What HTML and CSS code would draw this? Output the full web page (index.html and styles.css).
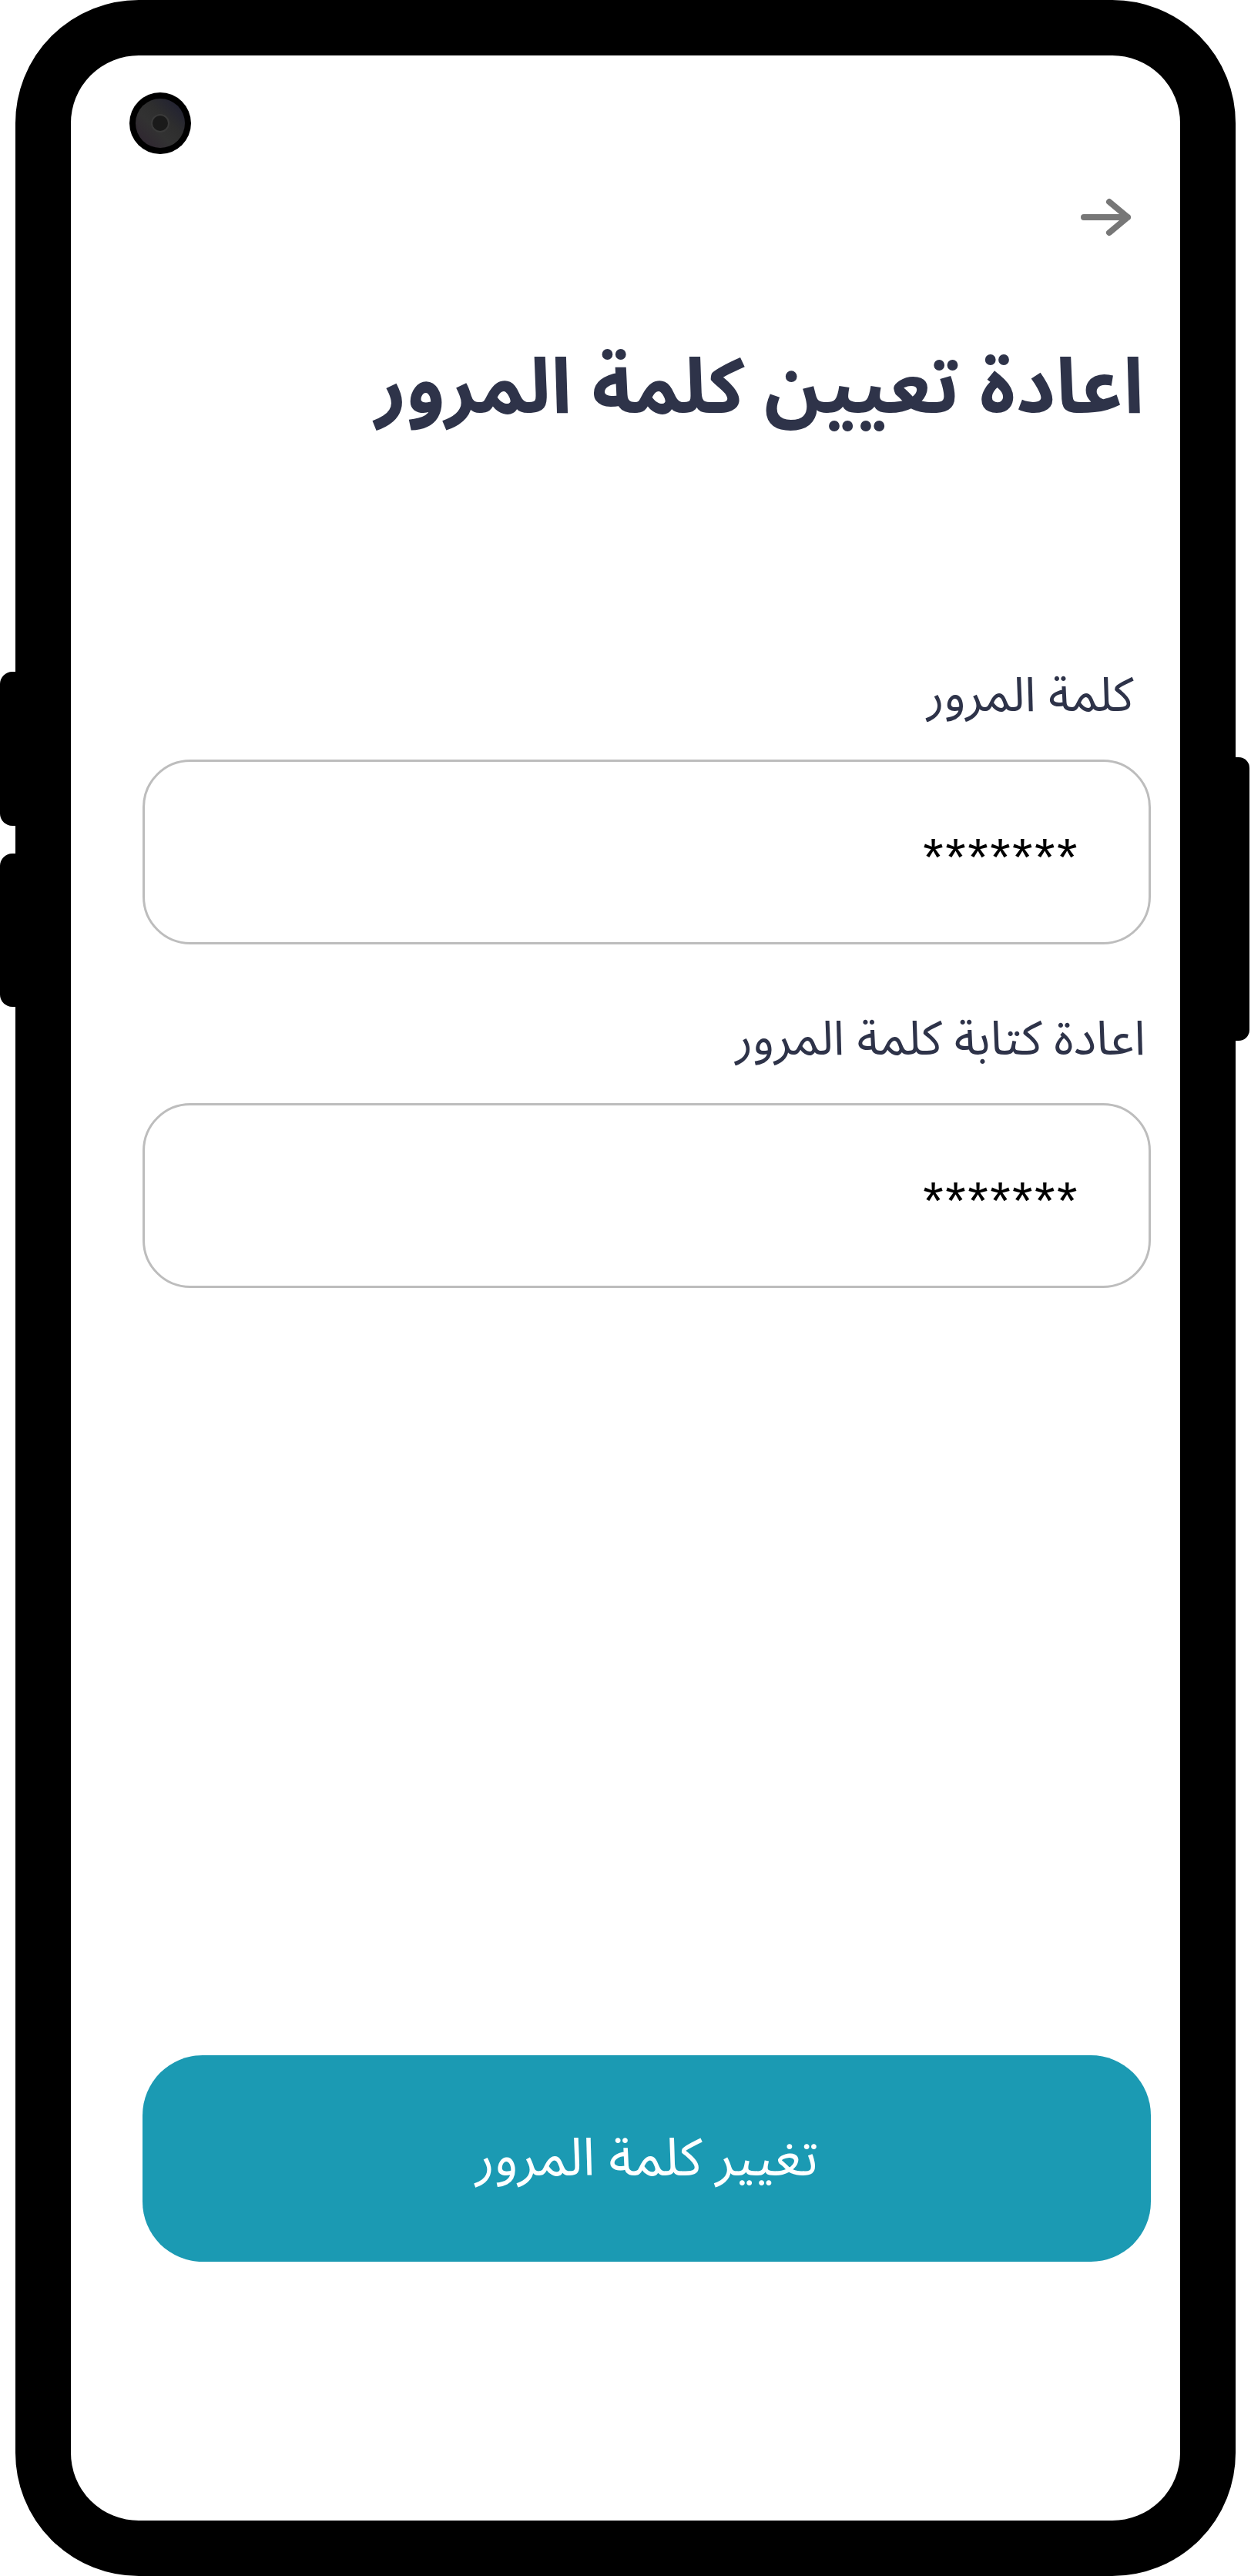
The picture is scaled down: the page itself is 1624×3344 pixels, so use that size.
FILE: index.html
```html
<!DOCTYPE html>
<html lang="ar">
<head>
<meta charset="utf-8">
<title>اعادة تعيين كلمة المرور</title>
<link rel="stylesheet" href="styles.css">
</head>
<body>
<div class="phone">
  <span class="side-key key-left-1"></span>
  <span class="side-key key-left-2"></span>
  <span class="side-key key-right"></span>
  <div class="device">
    <div class="screen" dir="rtl">
      <div class="topbar">
        <svg class="back-icon" width="72" height="56" viewBox="0 0 72 56" aria-hidden="true">
          <path d="M8 28 H65 M41 8 L65 28 L41 48" fill="none" stroke="#777777" stroke-width="8" stroke-linecap="round" stroke-linejoin="round"/>
        </svg>
      </div>
      <h1 class="title">اعادة تعيين كلمة المرور</h1>
      <label class="field-label label-first">كلمة المرور</label>
      <div class="field"><span class="mask">*******</span></div>
      <label class="field-label label-second">اعادة كتابة كلمة المرور</label>
      <div class="field"><span class="mask">*******</span></div>
      <button class="submit" type="button">تغيير كلمة المرور</button>
    </div>
  </div>
  <span class="camera"><span class="lens"><span class="pupil"></span></span></span>
</div>
</body>
</html>
```
FILE: styles.css
```css
html, body {
  margin: 0;
  padding: 0;
  background: #ffffff;
}

.phone {
  position: relative;
  width: 1624px;
  height: 3344px;
}

.device {
  box-sizing: border-box;
  width: 1584px;
  height: 3344px;
  margin-left: 20px;
  border: 72px solid #000000;
  border-radius: 160px;
  background: #ffffff;
  overflow: hidden;
}

.side-key {
  position: absolute;
  background: #000000;
}

.key-left-1 {
  left: 0;
  top: 872px;
  width: 24px;
  height: 200px;
  border-radius: 16px 0 0 16px;
}

.key-left-2 {
  left: 0;
  top: 1108px;
  width: 24px;
  height: 199px;
  border-radius: 16px 0 0 16px;
}

.key-right {
  left: 1600px;
  top: 983px;
  width: 22px;
  height: 368px;
  border-radius: 0 14px 14px 0;
}

.camera {
  position: absolute;
  left: 168px;
  top: 120px;
  width: 80px;
  height: 80px;
  border-radius: 50%;
  background: #000000;
  display: flex;
  align-items: center;
  justify-content: center;
}

.lens {
  width: 64px;
  height: 64px;
  border-radius: 50%;
  background: linear-gradient(225deg, #1d1d33 0%, #2e2e2e 40%, #323232 60%, #2e2230 100%);
  display: flex;
  align-items: center;
  justify-content: center;
}

.pupil {
  width: 20px;
  height: 20px;
  border-radius: 50%;
  background: #1a1a1a;
  border: 2px solid #3a3a3a;
}

.screen {
  box-sizing: border-box;
  height: 100%;
  display: flex;
  flex-direction: column;
  padding: 0 38px 336px 93px;
  font-family: "Noto Sans Arabic", "DejaVu Sans", sans-serif;
  color: #2e3349;
}

.topbar {
  display: flex;
  justify-content: flex-start;
  padding-top: 182px;
  padding-right: 23px;
}

.back-icon {
  display: block;
}

.title {
  margin: 130px 9px 0 0;
  font-size: 100px;
  line-height: 130px;
  font-weight: 700;
  color: #2e3349;
  text-align: right;
}

.field-label {
  display: block;
  font-size: 62px;
  line-height: 80px;
  text-align: right;
  color: #2e3349;
}

.label-first {
  margin: 294px 23px 0 0;
}

.label-second {
  margin: 84px 7px 0 0;
}

.field {
  box-sizing: border-box;
  height: 240px;
  margin-top: 42px;
  border: 3px solid #bdbdbd;
  border-radius: 62px;
  display: flex;
  align-items: center;
  padding-right: 90px;
}

.mask {
  font-family: "Liberation Sans", sans-serif;
  font-size: 68px;
  line-height: 68px;
  letter-spacing: 2.5px;
  color: #000000;
  padding-top: 12px;
}

.submit {
  margin-top: auto;
  height: 268px;
  border: none;
  border-radius: 78px;
  background: #1b9ab3;
  color: #ffffff;
  font-family: "Noto Sans Arabic", "DejaVu Sans", sans-serif;
  font-size: 68px;
  padding: 0;
}
```
